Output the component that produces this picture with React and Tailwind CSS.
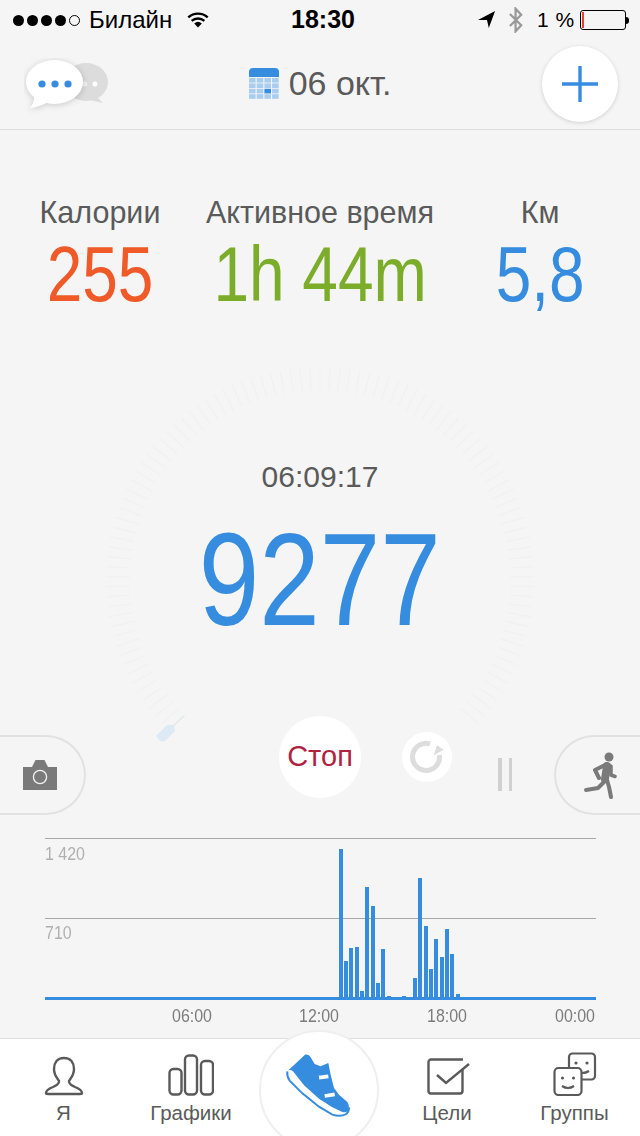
import React from "react";

const bars = [[339,849],[344,961],[349,948],[355,947],[360,991],[365,887],[371,906],[376,983],[381,949],[387,996],[402,996],[413,978],[418,878],[424,926],[429,969],[434,939],[440,957],[445,929],[450,954],[456,994]];

function Ticks() {
  const out = [];
  const cx = 215, cy = 215;
  for (let a = -135; a <= 135; a += 2.7) {
    const r = (a * Math.PI) / 180;
    const s = Math.sin(r), c = Math.cos(r);
    out.push(<line key={a} x1={cx + 190 * s} y1={cy - 190 * c} x2={cx + 214 * s} y2={cy - 214 * c} stroke="#f1f1f1" strokeWidth="1.3" />);
  }
  return <svg width="430" height="430" viewBox="0 0 430 430" className="absolute left-[105px] top-[235px]">{out}</svg>;
}

function Status() {
  return (
    <div className="h-[40px] relative flex items-center text-black text-[24px] pl-[13px] whitespace-nowrap">
      <div className="flex items-center gap-[3px] w-[67px]">
        {[0,1,2,3].map(i => <span key={i} className="w-[11px] h-[11px] shrink-0 rounded-full bg-black" />)}
        <span className="w-[11px] h-[11px] shrink-0 rounded-full border border-black" />
      </div>
      <span className="ml-[9px] w-[83px]">Билайн</span>
      <svg className="ml-[15px]" width="22" height="18" viewBox="0 0 26 20"><path d="M1.5 7 A17 17 0 0 1 24.5 7" fill="none" stroke="#000" strokeWidth="2.8"/><path d="M5.5 11 A11.5 11.5 0 0 1 20.5 11" fill="none" stroke="#000" strokeWidth="2.8"/><path d="M8.5 14 L13 19 L17.5 14 A7 7 0 0 0 8.5 14Z" fill="#000"/></svg>
      <span className="ml-[82px] font-bold w-[66px] text-[25px]">18:30</span>
      <svg className="ml-[121px]" width="18" height="18" viewBox="0 0 20 20"><path d="M0 10 L19 0 L12 19 L10 10 Z" fill="#000"/></svg>
      <svg className="ml-[12px]" width="16" height="26" viewBox="0 0 18 30"><path d="M2 8 L15 21 L8.5 28 V2 L15 9 L2 22" fill="none" stroke="#999" strokeWidth="2.6"/></svg>
      <span className="ml-[13px] w-[37px] text-[21px] tracking-[0.5px]">1 %</span>
      <div className="ml-[6px] w-[46px] h-[20px] rounded-[3px] border border-black p-[1px]"><div className="w-[2px] h-full bg-[#e2402e]" /></div>
      <div className="w-[3px] h-[7px] bg-black rounded-r-full" />
    </div>
  );
}

function Header() {
  return (
    <div className="h-[90px] border-b border-[#dedede] relative flex items-center justify-center">
      <svg className="absolute left-[24px] top-[18px]" width="88" height="62" viewBox="0 0 88 62">
        <ellipse cx="62" cy="24" rx="22" ry="19" fill="#dcdcdc"/>
        <path d="M70 36 L79 45 L66 42 Z" fill="#dcdcdc"/>
        <circle cx="61" cy="26" r="2.5" fill="#f0f0f0"/><circle cx="71" cy="26" r="2.5" fill="#fff"/>
        <g style={{filter:"drop-shadow(0 1px 3px rgba(0,0,0,.18))"}}>
          <ellipse cx="30.5" cy="24" rx="28.5" ry="22" fill="#fff"/>
          <path d="M10 36 Q11 44 6 50 Q16 49 24 44 Z" fill="#fff"/>
        </g>
        <circle cx="18" cy="26" r="3.6" fill="#368ddf"/><circle cx="31" cy="26" r="3.6" fill="#368ddf"/><circle cx="44" cy="26" r="3.6" fill="#368ddf"/>
      </svg>
      <div className="flex items-center gap-[10px] text-[34px] text-[#5a5a5a] -mt-[2px]">
        <svg width="30" height="31" viewBox="0 0 30 31">
          <path d="M0 9 V4 a4 4 0 0 1 4-4 H26 a4 4 0 0 1 4 4 V9 Z" fill="#368ddf"/>
          {[0,1,2,3].map(r => [0,1,2,3].map(c => <rect key={r+"-"+c} x={c*7.7} y={10+r*5.4} width="6.6" height="4.6" fill={r===2&&c===2?"#368ddf":"#a9cdef"} />))}
        </svg>
        <span>06 окт.</span>
      </div>
      <div className="absolute left-[542px] top-[6px] w-[76px] h-[76px] rounded-full bg-white shadow-[0_1px_4px_rgba(0,0,0,0.15)] flex items-center justify-center">
        <svg width="36" height="36" viewBox="0 0 36 36"><path d="M18 0V36M0 18H36" stroke="#368ddf" strokeWidth="3.4"/></svg>
      </div>
    </div>
  );
}

function Stat({ label, value, color, cls }) {
  return (
    <div className={"flex flex-col items-center " + cls}>
      <span className="text-[30.5px] leading-[34px] text-[#5a5a5a]">{label}</span>
      <span className={"text-[78px] leading-[72px] mt-[9px] whitespace-nowrap scale-x-[0.82] " + color}>{value}</span>
    </div>
  );
}

function Controls() {
  return (
    <div className="flex items-start h-[106px]">
      <div className="mt-[19px] w-[86px] h-[80px] rounded-r-[40px] border-2 border-l-0 border-[#e2e2e2] flex items-center pl-[23px]">
        <svg width="34" height="30" viewBox="0 0 34 30"><path d="M0 7 H9 L12 1 a1 1 0 0 1 1-1 H21 a1 1 0 0 1 1 1 L25 7 H34 V30 H0 Z" fill="#7a7a7a"/><circle cx="17" cy="17" r="6.6" fill="none" stroke="#f2f2f2" strokeWidth="1.3"/></svg>
      </div>
      <div className="ml-[193px] w-[82px] h-[82px] rounded-full bg-white flex items-center justify-center text-[29px] text-[#b0233f]">Стоп</div>
      <div className="ml-[41px] mt-[16px] w-[50px] h-[50px] rounded-full bg-white flex items-center justify-center">
        <svg width="36" height="34" viewBox="0 0 36 34"><path d="M21 4 A13.5 13.5 0 1 0 30.4 15" fill="none" stroke="#dddddd" strokeWidth="5"/><path d="M24.7 15.3 L34.7 9.7 L28 5.3 Z" fill="#dddddd"/></svg>
      </div>
      <div className="ml-[46px] mt-[42px] flex gap-[7px]">
        <div className="w-[4px] h-[33px] bg-[#d0d0d0]" />
        <div className="w-[3px] h-[33px] bg-[#d0d0d0]" />
      </div>
      <div className="ml-[42px] mt-[19px] flex-1 h-[80px] rounded-l-[40px] border-2 border-r-0 border-[#e2e2e2] flex items-center pl-[27px]">
        <svg width="34" height="48" viewBox="0 0 34 48" className="shrink-0" fill="none" stroke="#7a7a7a" strokeLinecap="round" strokeLinejoin="round">
          <circle cx="26" cy="6" r="4.5" fill="#7a7a7a" stroke="none"/>
          <path d="M24 13 L12 19 L16 27" strokeWidth="4"/>
          <path d="M24 15 L22 28" strokeWidth="8"/>
          <path d="M28 15 L28 24 L32 25.5" strokeWidth="3.5"/>
          <path d="M21 31 L15 37 L3 39" strokeWidth="4"/>
          <path d="M24 29 L26 36 L28 46" strokeWidth="4"/>
        </svg>
      </div>
    </div>
  );
}

function ChartLabel({ cls, children }) {
  return <span className={"absolute text-[19px] leading-[20px] scale-x-[0.84] origin-left " + cls}>{children}</span>;
}

function Chart() {
  return (
    <div className="h-[216px] relative">
      <svg width="640" height="184" viewBox="0 822 640 184" className="block">
        <line x1="45" x2="596" y1="838.5" y2="838.5" stroke="#a8a8a8"/>
        <line x1="45" x2="596" y1="918.5" y2="918.5" stroke="#a8a8a8"/>
        {bars.map(([x,y]) => <rect key={x} x={x} y={y} width="4" height={998-y} fill="#368ddf"/>)}
        <rect x="45" y="997" width="551" height="3" fill="#368ddf"/>
      </svg>
      <ChartLabel cls="left-[45px] top-[22px] text-[#b0b0b0]">1 420</ChartLabel>
      <ChartLabel cls="left-[45px] top-[101px] text-[#b0b0b0]">710</ChartLabel>
      <ChartLabel cls="left-[172px] top-[184px] text-[#7c7c7c]">06:00</ChartLabel>
      <ChartLabel cls="left-[299px] top-[184px] text-[#7c7c7c]">12:00</ChartLabel>
      <ChartLabel cls="left-[427px] top-[184px] text-[#7c7c7c]">18:00</ChartLabel>
      <ChartLabel cls="left-[555px] top-[184px] text-[#7c7c7c]">00:00</ChartLabel>
    </div>
  );
}

function Tab({ label, children, w }) {
  return (
    <div className={"flex flex-col items-center " + w}>
      <div className="h-[50px] flex items-end">{children}</div>
      <span className="text-[20.5px] leading-[24px] mt-[5px] text-[#5a5a5a]">{label}</span>
    </div>
  );
}

function TabBar() {
  return (
    <div className="h-[98px] bg-white border-t border-[#dedede] relative flex items-start pt-[7px]">
      <Tab label="Я" w="w-[127px]">
        <svg width="40" height="40" viewBox="0 0 40 40" fill="none" stroke="#5a5a5a" strokeWidth="2.4"><path d="M20 2 C13 2 10 7 10 13 C10 19 13 22 15 25 C15 28 13 29 9 31 C4 33 2 35 2 37 C2 38 3 38 4 38 H36 C37 38 38 38 38 37 C38 35 36 33 31 31 C27 29 25 28 25 25 C27 22 30 19 30 13 C30 7 27 2 20 2 Z"/></svg>
      </Tab>
      <Tab label="Графики" w="w-[128px]">
        <svg width="46" height="42" viewBox="0 0 46 42" fill="none" stroke="#5a5a5a" strokeWidth="2.4"><rect x="1.5" y="15" width="12" height="25.5" rx="4"/><rect x="17" y="1.5" width="12" height="39" rx="4"/><rect x="33" y="7" width="12" height="33.5" rx="4"/></svg>
      </Tab>
      <div className="w-[130px]" />
      <Tab label="Цели" w="w-[124px]">
        <svg className="ml-[4px]" width="44" height="38" viewBox="0 0 44 38" fill="none" stroke="#5a5a5a" strokeWidth="2.4"><path d="M36 1.5 H4 a2.5 2.5 0 0 0 -2.5 2.5 V33 a2.5 2.5 0 0 0 2.5 2.5 H33 a2.5 2.5 0 0 0 2.5 -2.5 V11"/><path d="M10 17 L19 25 L42 6"/></svg>
      </Tab>
      <Tab label="Группы" w="w-[131px]">
        <svg width="44" height="44" viewBox="0 0 44 44" fill="none" stroke="#5a5a5a" strokeWidth="2.2">
          <path d="M16 16 V5 a3.5 3.5 0 0 1 3.5 -3.5 H38.5 a3.5 3.5 0 0 1 3.5 3.5 V24 a3.5 3.5 0 0 1 -3.5 3.5 H29"/>
          <rect x="1.5" y="16" width="27" height="27" rx="4"/>
          <circle cx="9.5" cy="26" r="1.6" fill="#5a5a5a" stroke="none"/><circle cx="20.5" cy="26" r="1.6" fill="#5a5a5a" stroke="none"/>
          <path d="M9 34 Q15 38 21 34" />
          <circle cx="23" cy="11" r="1.6" fill="#5a5a5a" stroke="none"/><circle cx="34" cy="11" r="1.6" fill="#5a5a5a" stroke="none"/>
          <path d="M29 21 Q33 21 36 19" />
        </svg>
      </Tab>
      <div className="absolute left-[259px] -top-[9px] w-[120px] h-[120px] rounded-full bg-white border-2 border-[#efefef] flex items-start justify-center pt-[6px]">
        <svg width="100" height="90" viewBox="0 0 300 270" className="shrink-0">
          <path d="M55 100 L108 50 Q118 48 124 56 L137 78 L155 85 L178 75 L185 110 L195 150 L210 170 L235 192 Q244 205 236 220 Q230 224 220 222 L190 208 L150 182 L105 142 L72 100 Q62 92 55 100 Z" fill="#368ddf"/>
          <path d="M55 100 Q53 115 62 128 L100 166 L150 206 L190 230 Q215 238 232 228 Q240 220 241 208" fill="none" stroke="#368ddf" strokeWidth="6"/>
          <path d="M150 119 L178 115 M167 174 L197 169" stroke="#fff" strokeWidth="11"/>
        </svg>
      </div>
    </div>
  );
}

export default function App() {
  return (
    <div className="w-[640px] h-[1136px] bg-[#f5f5f5] relative overflow-hidden flex flex-col font-['Liberation_Sans',sans-serif]">
      <Status />
      <Header />
      <div className="relative flex-1 flex flex-col">
        <Ticks />
        <svg className="absolute left-[153px] top-[585px]" width="34" height="34" viewBox="0 0 34 34"><path d="M3 21 L14 10 L21 10 L22 16 L12 26 Q9 27 7 26 Z" fill="#dde9f5"/><line x1="20" y1="11" x2="31" y2="1" stroke="#e4e8ec" strokeWidth="1.5"/></svg>
        <div className="relative flex mt-[65px] h-[115px]">
          <Stat label="Калории" value="255" color="text-[#f05a28]" cls="w-[200px]" />
          <Stat label="Активное время" value="1h 44m" color="text-[#7cad2a]" cls="w-[240px]" />
          <Stat label="Км" value="5,8" color="text-[#368ddf]" cls="w-[200px]" />
        </div>
        <div className="relative flex flex-col items-center mt-[149px] h-[257px]">
          <span className="text-[30px] leading-[36px] text-[#5a5a5a]">06:09:17</span>
          <span className="text-[131px] leading-[124px] mt-[23px] scale-x-[0.83] text-[#368ddf]">9277</span>
        </div>
        <div className="relative"><Controls /></div>
        <div className="relative"><Chart /></div>
      </div>
      <TabBar />
    </div>
  );
}
